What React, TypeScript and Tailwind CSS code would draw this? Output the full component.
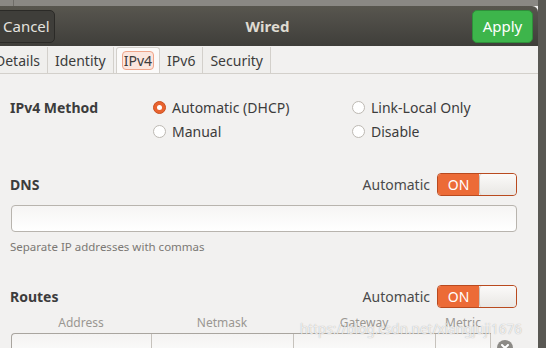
import type React from 'react'

const font = { fontFamily: '"Noto Sans", "Open Sans", sans-serif' }

const Radio: React.FC<{ checked?: boolean; label: string }> = ({ checked, label }) => (
  <div className="flex items-center gap-[6px] h-[24px]">
    {checked ? (
      <span className="w-[13px] h-[13px] rounded-full bg-[#e9632f] border border-[#c9501f] flex items-center justify-center">
        <span className="w-[5px] h-[5px] rounded-full bg-white" />
      </span>
    ) : (
      <span className="w-[13px] h-[13px] rounded-full bg-white border border-[#bdb9b3]" />
    )}
    <span className="text-[14px] text-[#3c3c3c]">{label}</span>
  </div>
)

const Switch: React.FC = () => (
  <div className="flex w-[80px] h-[23px] rounded-[4px] border border-[#b94a1f] overflow-hidden">
    <div className="w-[41px] bg-[#ec6b37] text-white text-[14px] flex items-center justify-center">ON</div>
    <div className="flex-1 bg-gradient-to-b from-[#fbfaf9] to-[#e9e7e4] border-l border-[#c9c4be] rounded-[3px]" />
  </div>
)

const tabs = ['Details', 'Identity', 'IPv4', 'IPv6', 'Security']

export default function App() {
  return (
    <div className="w-[546px] h-[348px] overflow-hidden flex bg-[#595853] relative" style={font}>
      <div className="w-[538px] h-[348px] bg-[#f2f1f0] overflow-hidden">
        {/* desktop strip behind window */}
        <div className="h-[6px] bg-[#8a8884] flex">
          <div className="w-[14px] border-r border-[#6f6d69]" />
        </div>

        {/* header bar */}
        <div className="h-[40px] bg-gradient-to-b from-[#58564f] to-[#3f3e3a] rounded-tr-[6px] flex items-center justify-between pr-[5px]">
          <div className="h-[33px] w-[56px] -ml-[1px] rounded-r-[5px] bg-[#3f3e3a] border border-[#2b2a27] flex items-center pl-[3px] text-[15px] text-[#e4e2df]">
            Cancel
          </div>
          <span className="text-[15px] font-bold text-[#dfdbd2] ml-[8px]">Wired</span>
          <div className="h-[33px] w-[61px] rounded-[5px] bg-[#3db54b] border border-[#2e8f3a] flex items-center justify-center text-[15px] text-white">
            Apply
          </div>
        </div>

        {/* tabs */}
        <div className="h-[28px] flex items-end border-b border-[#d3d0cb] -ml-[12px]">
          {tabs.map((t) =>
            t === 'IPv4' ? (
              <div
                key={t}
                className="h-[26px] px-[5px] ml-[2px] bg-[#fbfaf9] border border-b-0 border-[#d3d0cb] rounded-t-[3px] flex items-center"
              >
                <span className="px-[1px] h-[19px] flex items-center rounded-[4px] border border-[#efa58a] bg-[#fbe6de] text-[14px] text-[#3c3c3c]">
                  {t}
                </span>
              </div>
            ) : (
              <div
                key={t}
                className="h-[26px] px-[7px] bg-[#f0efed] border-r border-[#d3d0cb] flex items-center text-[14px] text-[#3c3c3c]"
              >
                {t}
              </div>
            ),
          )}
        </div>

        {/* content */}
        <div className="px-[10px] pt-[21px] text-[#3c3c3c]">
          <div className="flex">
            <div className="w-[143px] text-[14px] font-bold h-[24px] flex items-center">IPv4 Method</div>
            <div className="grid grid-cols-[199px_1fr]">
              <Radio checked label="Automatic (DHCP)" />
              <Radio label="Link-Local Only" />
              <Radio label="Manual" />
              <Radio label="Disable" />
            </div>
          </div>

          <div className="mt-[30px] flex items-center justify-between pr-[11px]">
            <span className="text-[14px] font-bold">DNS</span>
            <div className="flex items-center gap-[7px]">
              <span className="text-[14px] text-[#4a4a4a]">Automatic</span>
              <Switch />
            </div>
          </div>

          <div className="mt-[9px] ml-[1px] mr-[11px] h-[27px] rounded-[4px] border border-[#b8b4ae] bg-gradient-to-b from-[#f6f5f4] to-white" />
          <div className="mt-[6px] text-[11.5px] text-[#7b7874]">Separate IP addresses with commas</div>

          <div className="mt-[30px] flex items-center justify-between pr-[11px]">
            <span className="text-[14px] font-bold">Routes</span>
            <div className="flex items-center gap-[7px]">
              <span className="text-[14px] text-[#4a4a4a]">Automatic</span>
              <Switch />
            </div>
          </div>

          <div className="mt-[6px] ml-[1px] grid grid-cols-[140px_142px_142px_56px] text-[12px] text-[#9a9792] text-center">
            <span>Address</span>
            <span>Netmask</span>
            <span>Gateway</span>
            <span>Metric</span>
          </div>

          <div className="mt-[1px] ml-[1px] flex items-start">
            <div className="w-[480px] h-[30px] rounded-tl-[4px] border border-r-0 border-b-0 border-[#a9a59f] bg-gradient-to-b from-[#f4f3f2] to-white grid grid-cols-[140px_142px_142px_1fr]">
              <div className="border-r border-[#c6c2bc]" />
              <div className="border-r border-[#c6c2bc]" />
              <div className="border-r border-[#c6c2bc]" />
              <div className="border-r border-[#c6c2bc]" />
            </div>
            <div className="ml-[6px] mt-[7px] w-[16px] h-[16px] rounded-full bg-[#8c8a86] flex items-center justify-center">
              <svg width="8" height="8" viewBox="0 0 8 8">
                <path d="M1 1 L7 7 M7 1 L1 7" stroke="#fff" strokeWidth="2" strokeLinecap="round" />
              </svg>
            </div>
          </div>
        </div>
      </div>

      {/* watermark */}
      <div className="absolute left-[300px] top-[319px] whitespace-nowrap text-[13.5px] text-white/80 [text-shadow:0_0_1px_rgba(0,0,0,0.35)]">
        https://blog.csdn.net/xiangjuji1676
      </div>
    </div>
  )
}
